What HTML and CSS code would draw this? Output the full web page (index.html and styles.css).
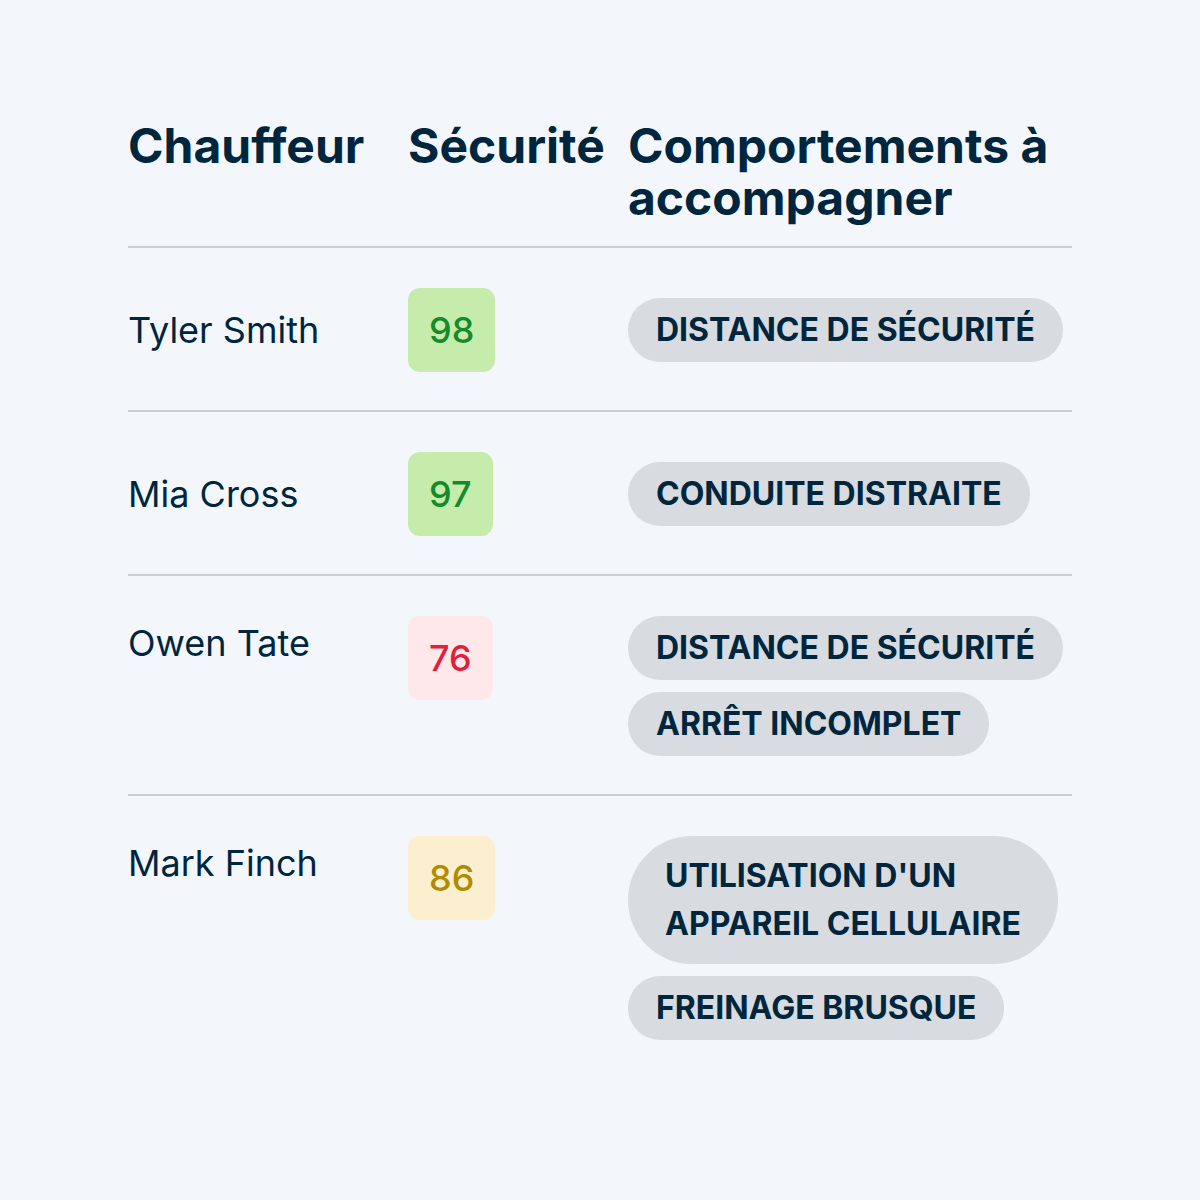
FILE: index.html
```html
<!DOCTYPE html>
<html lang="fr">
<head>
<meta charset="utf-8">
<title>Comportements</title>
<link rel="stylesheet" href="styles.css">
</head>
<body>
<main class="page">
  <div class="table">
    <div class="row head">
      <div class="col-name">Chauffeur</div>
      <div class="col-score">Sécurité</div>
      <div class="col-tags">Comportements à accompagner</div>
    </div>
    <div class="row">
      <div class="col-name name">Tyler Smith</div>
      <div class="col-score"><span class="score good">98</span></div>
      <div class="col-tags"><span class="pill">DISTANCE DE SÉCURITÉ</span></div>
    </div>
    <div class="row">
      <div class="col-name name">Mia Cross</div>
      <div class="col-score"><span class="score good">97</span></div>
      <div class="col-tags"><span class="pill">CONDUITE DISTRAITE</span></div>
    </div>
    <div class="row top">
      <div class="col-name name">Owen Tate</div>
      <div class="col-score"><span class="score bad">76</span></div>
      <div class="col-tags">
        <span class="pill">DISTANCE DE SÉCURITÉ</span>
        <span class="pill">ARRÊT INCOMPLET</span>
      </div>
    </div>
    <div class="row top last">
      <div class="col-name name">Mark Finch</div>
      <div class="col-score"><span class="score warn">86</span></div>
      <div class="col-tags">
        <span class="pill wrap">UTILISATION D'UN APPAREIL CELLULAIRE</span>
        <span class="pill">FREINAGE BRUSQUE</span>
      </div>
    </div>
  </div>
</main>
</body>
</html>
```

FILE: styles.css
```css
* { box-sizing: border-box; }
html, body {
  margin: 0;
  background: #f3f6fb;
}
body {
  font-family: Inter, "Noto Sans", sans-serif;
  color: #00263e;
  width: 1200px;
  height: 1200px;
}
.page {
  padding: 120px 128px 0 128px;
}
.table {
  width: 944px;
  display: flex;
  flex-direction: column;
}
.row {
  display: grid;
  grid-template-columns: 280px 220px 444px;
  align-items: center;
  padding: 40px 0 38px;
  border-bottom: 2px solid #c9cdd4;
}
.row.top { align-items: start; }
.row.last { border-bottom: none; }
.row.head {
  font-size: 48px;
  font-weight: 700;
  line-height: 52px;
  padding: 0 0 22px;
  align-items: start;
}
.name {
  font-size: 36px;
  line-height: 54px;
  font-weight: 400;
}
.col-tags {
  display: flex;
  flex-direction: column;
  align-items: flex-start;
  gap: 12px;
}
.score {
  display: inline-flex;
  align-items: center;
  justify-content: center;
  height: 84px;
  padding: 0 21px;
  border-radius: 12px;
  font-size: 36px;
  font-weight: 500;
}
.score.good { background: #c5ecaa; color: #148a2c; }
.score.bad { background: #ffe8ea; color: #e0213a; }
.score.warn { background: #fbefcf; color: #b08b00; }
.pill {
  display: inline-block;
  background: #d8dbdf;
  border-radius: 999px;
  padding: 8px 28px;
  font-size: 32px;
  font-weight: 700;
  line-height: 48px;
}
.pill.wrap {
  max-width: 430px;
  padding: 16px 37px;
}
```
